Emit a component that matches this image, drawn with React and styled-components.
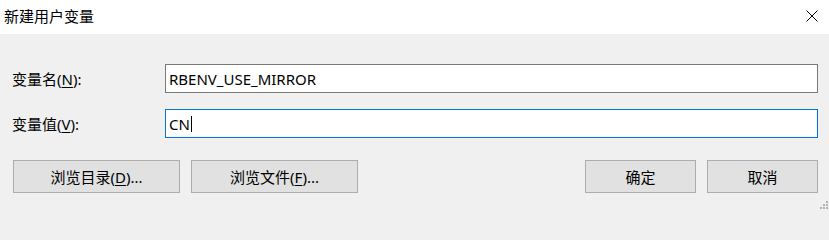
import React from 'react';
import styled, { createGlobalStyle } from 'styled-components';

const GlobalStyle = createGlobalStyle`
  html, body {
    margin: 0;
    padding: 0;
    background: #f0f0f0;
  }
  body {
    font-family: "Noto Sans", "Noto Sans CJK SC", sans-serif;
    font-size: 15px;
    color: #000;
  }
`;

const Window = styled.div`
  position: relative;
  width: 829px;
  height: 210px;
  display: flex;
  flex-direction: column;
  background: #f0f0f0;
  overflow: hidden;
`;

const TitleBar = styled.div`
  height: 34px;
  flex: none;
  background: #fff;
  display: flex;
  align-items: center;
  justify-content: space-between;
  padding: 0 11px 2px 4px;
  box-sizing: border-box;
`;

const Title = styled.div`
  font-size: 15px;
  line-height: 1;
`;

const CloseButton = styled.div`
  width: 12px;
  height: 12px;
  display: flex;
`;

const Body = styled.div`
  padding: 30px 11px 0 12px;
`;

const Form = styled.div`
  display: grid;
  grid-template-columns: 153px 1fr;
  row-gap: 16px;
  align-items: center;
`;

const Label = styled.label`
  font-size: 15px;
  line-height: 1;
  padding-top: 1px;
`;

const Key = styled.span`
  text-decoration: underline;
  text-underline-offset: 2px;
`;

const Field = styled.div`
  height: 29px;
  box-sizing: border-box;
  border: 1px solid ${(p) => (p.$focused ? '#0078d7' : '#7a7a7a')};
  background: #fff;
  display: flex;
  align-items: center;
  padding-left: 3px;
  font-size: 15px;
  white-space: pre;
`;

const Caret = styled.span`
  display: inline-block;
  width: 1px;
  height: 16px;
  background: #000;
  margin-left: 1px;
`;

const ButtonRow = styled.div`
  display: flex;
  align-items: center;
  margin-top: 22px;
  padding-left: 1px;
  gap: 11px;
`;

const Spacer = styled.div`
  flex: 1;
`;

const Button = styled.button`
  width: ${(p) => p.$width}px;
  height: 33px;
  box-sizing: border-box;
  border: 1px solid #adadad;
  background: #e1e1e1;
  font-family: inherit;
  font-size: 15px;
  color: #000;
  padding: 0;
  margin: 0;
  display: flex;
  align-items: center;
  justify-content: center;
`;

const Grip = styled.svg`
  position: absolute;
  right: 0;
  bottom: 0;
`;

export default function App() {
  return (
    <Window>
      <GlobalStyle />
      <TitleBar>
        <Title>新建用户变量</Title>
        <CloseButton>
          <svg width="12" height="12" viewBox="0 0 12 12">
            <path d="M0.5 0.5 L11.5 11.5 M11.5 0.5 L0.5 11.5" stroke="#000" strokeWidth="1" />
          </svg>
        </CloseButton>
      </TitleBar>
      <Body>
        <Form>
          <Label>变量名(<Key>N</Key>):</Label>
          <Field>RBENV_USE_MIRROR</Field>
          <Label>变量值(<Key>V</Key>):</Label>
          <Field $focused>
            CN<Caret />
          </Field>
        </Form>
        <ButtonRow>
          <Button $width={167}>浏览目录(<Key>D</Key>)...</Button>
          <Button $width={167}>浏览文件(<Key>F</Key>)...</Button>
          <Spacer />
          <Button $width={111}>确定</Button>
          <Button $width={111}>取消</Button>
        </ButtonRow>
      </Body>
      <Grip width="10" height="10" viewBox="0 0 10 10">
        <g fill="#b4b4b4">
          <rect x="7" y="1" width="2" height="2" />
          <rect x="4" y="4" width="2" height="2" />
          <rect x="7" y="4" width="2" height="2" />
          <rect x="1" y="7" width="2" height="2" />
          <rect x="4" y="7" width="2" height="2" />
          <rect x="7" y="7" width="2" height="2" />
        </g>
      </Grip>
    </Window>
  );
}
